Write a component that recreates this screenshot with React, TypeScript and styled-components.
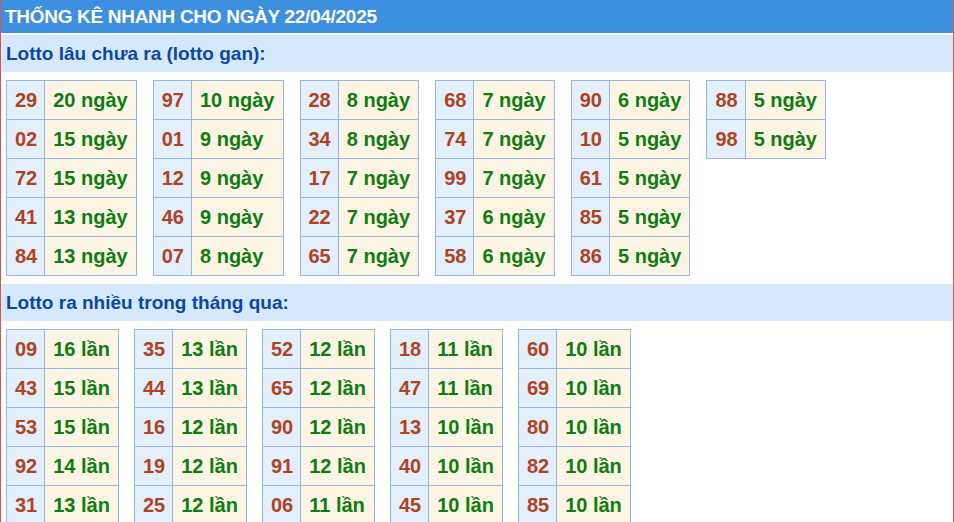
import React from "react";
import styled, { createGlobalStyle } from "styled-components";

const G = createGlobalStyle`
  body { margin: 0; background: #fff; font-family: "Liberation Sans", Arial, sans-serif; }
`;

const Page = styled.div`
  width: 954px; height: 522px; box-sizing: border-box; overflow: hidden;
  border-left: 1px solid #d9534f; border-right: 1px solid #d9534f;
`;
const Title = styled.div`
  background: #3d8fe0; color: #fff; font-weight: bold; font-size: 19px;
  height: 33px; line-height: 33px; padding-left: 4px; letter-spacing: -0.3px;
`;
const Section = styled.div`
  background: #d6e8fb; color: #0b47a5; font-weight: bold; font-size: 19px;
  height: 37px; line-height: 37px; padding-left: 5px; margin-top: ${p => p.$mt}px;
`;
const Groups = styled.div`
  display: flex; align-items: flex-start; gap: ${p => p.$gap}px; padding: 8px 5px 0;
`;
const Table = styled.table`
  border-collapse: collapse; font-weight: bold; font-size: 20px;
`;
const Num = styled.td`
  border: 1px solid #98b6e4; background: #e4effc; color: #b2411e;
  height: 38px; padding: 0 7px 0 8px; text-align: center;
`;
const Val = styled.td`
  border: 1px solid #98b6e4; background: #fdf5e4; color: #0d7d12;
  padding: 0 8px 0 8px;
`;

const gan = [
  [["29","20"],["02","15"],["72","15"],["41","13"],["84","13"]],
  [["97","10"],["01","9"],["12","9"],["46","9"],["07","8"]],
  [["28","8"],["34","8"],["17","7"],["22","7"],["65","7"]],
  [["68","7"],["74","7"],["99","7"],["37","6"],["58","6"]],
  [["90","6"],["10","5"],["61","5"],["85","5"],["86","5"]],
  [["88","5"],["98","5"]],
];
const nhieu = [
  [["09","16"],["43","15"],["53","15"],["92","14"],["31","13"]],
  [["35","13"],["44","13"],["16","12"],["19","12"],["25","12"]],
  [["52","12"],["65","12"],["90","12"],["91","12"],["06","11"]],
  [["18","11"],["47","11"],["13","10"],["40","10"],["45","10"]],
  [["60","10"],["69","10"],["80","10"],["82","10"],["85","10"]],
];

const Block = ({ data, unit, gap }: { data: string[][][]; unit: string; gap: number }) => (
  <Groups $gap={gap}>
    {data.map((g, i) => (
      <Table key={i}><tbody>
        {g.map(([n, v]) => (
          <tr key={n}><Num>{n}</Num><Val>{v} {unit}</Val></tr>
        ))}
      </tbody></Table>
    ))}
  </Groups>
);

export default function App() {
  return (
    <Page>
      <G />
      <Title>THỐNG KÊ NHANH CHO NGÀY 22/04/2025</Title>
      <Section $mt={2}>Lotto lâu chưa ra (lotto gan):</Section>
      <Block data={gan} unit="ngày" gap={16} />
      <Section $mt={8}>Lotto ra nhiều trong tháng qua:</Section>
      <Block data={nhieu} unit="lần" gap={15} />
    </Page>
  );
}
